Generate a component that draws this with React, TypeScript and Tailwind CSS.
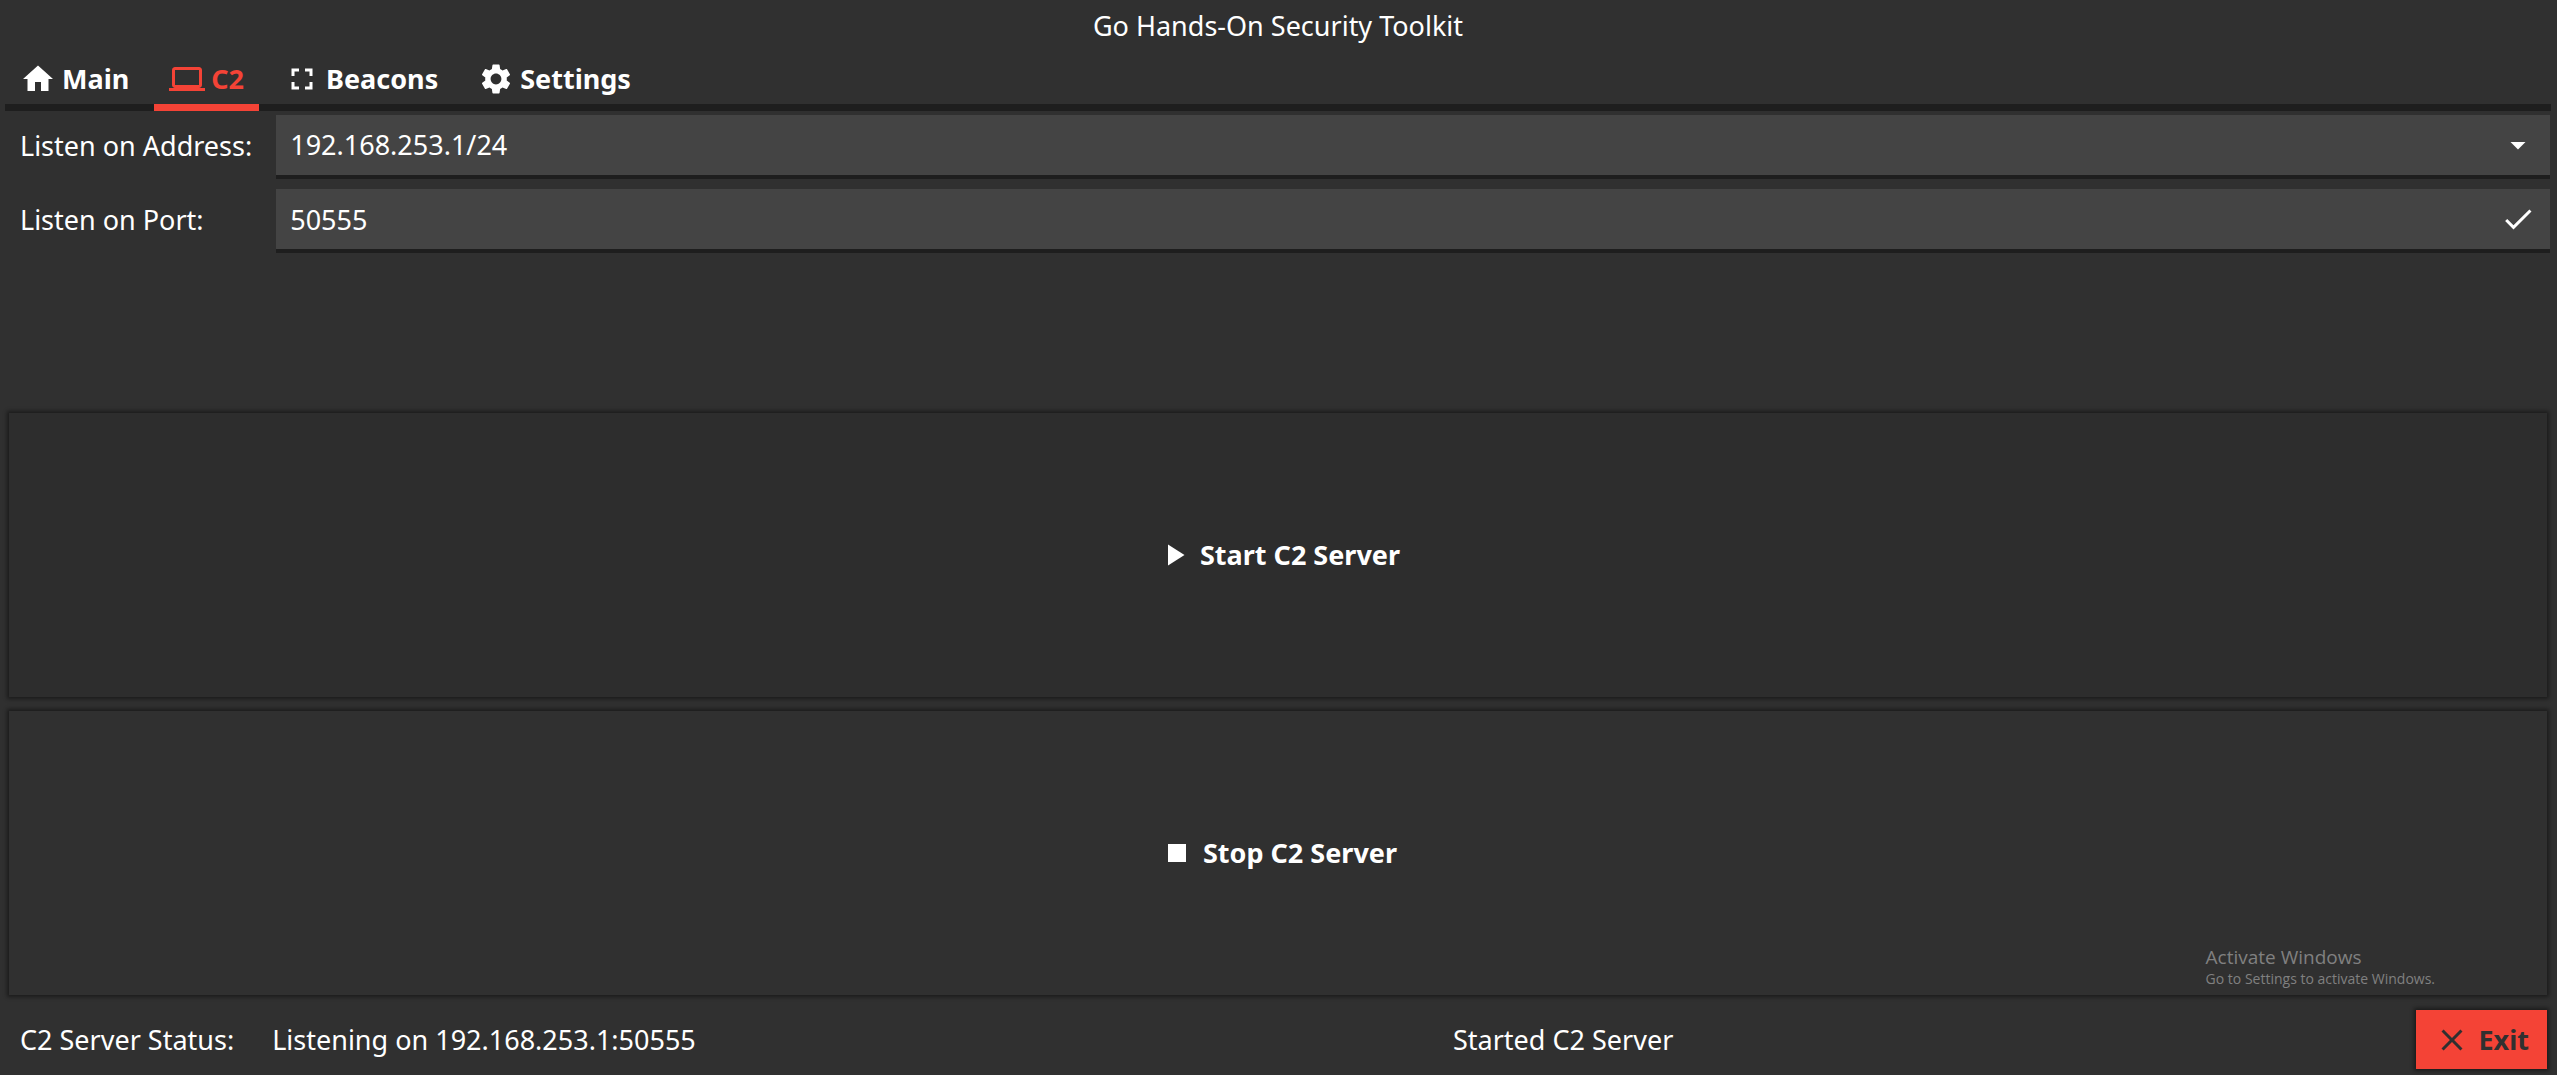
import { useState } from "react";
import type { ReactNode } from "react";

const paths = {
  home: "M10 20v-6h4v6h5v-8h3L12 3 2 12h3v8z",
  computer:
    "M20 18c1.1 0 1.99-.9 1.99-2L22 6c0-1.1-.9-2-2-2H4c-1.1 0-2 .9-2 2v10c0 1.1.9 2 2 2H0v2h24v-2h-4zM4 6h16v10H4V6z",
  fullscreen:
    "M7 14H5v5h5v-2H7v-3zm-2-4h2V7h3V5H5v5zm12 7h-3v2h5v-5h-2v3zM14 5v2h3v3h2V5h-5z",
  settings:
    "M19.14 12.94c.04-.3.06-.61.06-.94 0-.32-.02-.64-.07-.94l2.03-1.58c.18-.14.23-.41.12-.61l-1.92-3.32c-.12-.22-.37-.29-.59-.22l-2.39.96c-.5-.38-1.03-.7-1.62-.94l-.36-2.54c-.04-.24-.24-.41-.48-.41h-3.84c-.24 0-.43.17-.47.41l-.36 2.54c-.59.24-1.13.57-1.62.94l-2.39-.96c-.22-.08-.47 0-.59.22L2.74 8.87c-.12.21-.08.47.12.61l2.03 1.58c-.05.3-.09.63-.09.94s.02.64.07.94l-2.03 1.58c-.18.14-.23.41-.12.61l1.92 3.32c.12.22.37.29.59.22l2.39-.96c.5.38 1.03.7 1.62.94l.36 2.54c.05.24.24.41.48.41h3.84c.24 0 .44-.17.47-.41l.36-2.54c.59-.24 1.13-.56 1.62-.94l2.39.96c.22.08.47 0 .59-.22l1.92-3.32c.12-.22.07-.47-.12-.61l-2.01-1.58zM12 15.6c-1.98 0-3.6-1.62-3.6-3.6s1.62-3.6 3.6-3.6 3.6 1.62 3.6 3.6-1.62 3.6-3.6 3.6z",
  dropDown: "M7 10l5 5 5-5z",
  check: "M9 16.17L4.83 12l-1.42 1.41L9 19 21 7l-1.41-1.41z",
  play: "M8 5v14l11-7z",
  stop: "M6 6h12v12H6z",
  close:
    "M19 6.41L17.59 5 12 10.59 6.41 5 5 6.41 10.59 12 5 17.59 6.41 19 12 13.41 17.59 19 19 17.59 13.41 12z",
};

type IconName = keyof typeof paths;

function Icon({ name, className = "" }: { name: IconName; className?: string }) {
  return (
    <svg viewBox="0 0 24 24" fill="currentColor" aria-hidden="true" className={`size-9 shrink-0 ${className}`}>
      <path d={paths[name]} />
    </svg>
  );
}

const tabs: { icon: IconName; label: string }[] = [
  { icon: "home", label: "Main" },
  { icon: "computer", label: "C2" },
  { icon: "fullscreen", label: "Beacons" },
  { icon: "settings", label: "Settings" },
];

function ActionButton({ icon, className, children }: { icon: IconName; className: string; children: ReactNode }) {
  return (
    <button
      type="button"
      className={`mx-1 flex items-center justify-center gap-2 font-bold shadow-[0_0_4px_2px_rgba(0,0,0,0.45)] ${className}`}
    >
      <Icon name={icon} />
      {children}
    </button>
  );
}

const fieldClass =
  "h-16 w-full appearance-none rounded-none border-b-4 border-[#1e1e1e] bg-[#444444] pr-16 pl-3.5 text-white outline-none";

export default function App() {
  const [active, setActive] = useState("C2");
  const [port, setPort] = useState("50555");

  return (
    <div className="relative flex min-h-screen flex-col bg-[#303030] pr-1.5 pl-[5px] font-['Noto_Sans',sans-serif] text-[27px] leading-9 text-white">
      <h1 className="pt-2 pb-2.5 text-center">Go Hands-On Security Toolkit</h1>

      <nav role="tablist" className="flex gap-2.5 bg-[linear-gradient(to_top,#1e1e1e_7px,transparent_7px)]">
        {tabs.map(({ icon, label }) => (
          <button
            key={label}
            type="button"
            role="tab"
            aria-selected={active === label}
            onClick={() => setActive(label)}
            className={`flex h-[57px] items-center gap-1.5 border-b-[7px] px-[15px] font-bold ${
              active === label ? "border-[#f44336] text-[#f44336]" : "border-transparent"
            }`}
          >
            <Icon name={icon} />
            {label}
          </button>
        ))}
      </nav>

      <main className="mt-1 grid flex-1 grid-rows-3 gap-3.5">
        <form className="grid grid-cols-[auto_1fr] content-start items-center gap-x-6 gap-y-2.5 pr-px">
          <label htmlFor="address" className="pb-0.5 pl-[15px]">
            Listen on Address:
          </label>
          <div className="relative">
            <select id="address" className={fieldClass}>
              <option>192.168.253.1/24</option>
            </select>
            <Icon name="dropDown" className="pointer-events-none absolute top-3 right-3.5" />
          </div>
          <label htmlFor="port" className="pb-0.5 pl-[15px]">
            Listen on Port:
          </label>
          <div className="relative">
            <input id="port" value={port} onChange={(e) => setPort(e.target.value)} className={fieldClass} />
            <Icon name="check" className="pointer-events-none absolute top-3 right-3.5" />
          </div>
        </form>
        <ActionButton icon="play" className="bg-[#2d2d2d]">
          Start C2 Server
        </ActionButton>
        <ActionButton icon="stop" className="bg-[#303030]">
          Stop C2 Server
        </ActionButton>
      </main>

      <footer className="mt-[15px] mb-1.5 flex items-center pr-1 pl-[15px]">
        <span>C2 Server Status:</span>
        <span className="ml-[38px]">Listening on 192.168.253.1:50555</span>
        <span className="flex-1 pl-3.5 text-center">Started C2 Server</span>
        <button
          type="button"
          className="flex h-[59px] items-center gap-2 bg-[#f44336] px-[18px] font-bold text-[#303030] shadow-[0_0_4px_2px_rgba(0,0,0,0.45)]"
        >
          <Icon name="close" />
          Exit
        </button>
      </footer>

      <aside className="pointer-events-none absolute right-[122px] bottom-[86px] font-['Open_Sans',sans-serif] text-[#808080]">
        <p className="text-[19px] leading-6">Activate Windows</p>
        <p className="text-[14px] leading-5">Go to Settings to activate Windows.</p>
      </aside>
    </div>
  );
}
